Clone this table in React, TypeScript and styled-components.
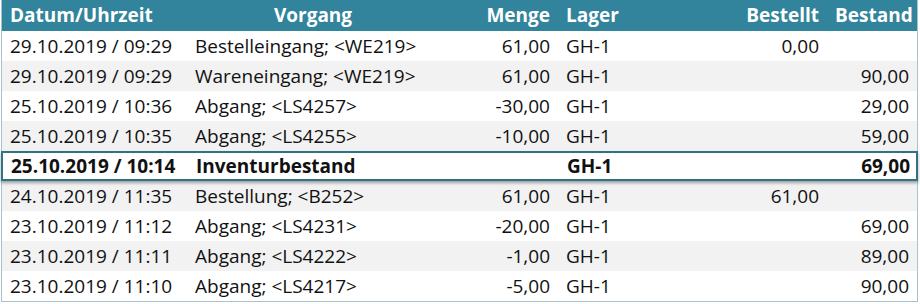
import styled, { createGlobalStyle, css } from "styled-components";

const GlobalStyle = createGlobalStyle`
  body {
    margin: 0;
    background: #ffffff;
    font-family: "Open Sans", "Liberation Sans", sans-serif;
  }
`;

type Entry = {
  date: string;
  action: string;
  qty: string;
  store: string;
  ordered: string;
  stock: string;
  inventory?: boolean;
};

const entries: Entry[] = [
  { date: "29.10.2019 / 09:29", action: "Bestelleingang; <WE219>", qty: "61,00", store: "GH-1", ordered: "0,00", stock: "" },
  { date: "29.10.2019 / 09:29", action: "Wareneingang; <WE219>", qty: "61,00", store: "GH-1", ordered: "", stock: "90,00" },
  { date: "25.10.2019 / 10:36", action: "Abgang; <LS4257>", qty: "-30,00", store: "GH-1", ordered: "", stock: "29,00" },
  { date: "25.10.2019 / 10:35", action: "Abgang; <LS4255>", qty: "-10,00", store: "GH-1", ordered: "", stock: "59,00" },
  { date: "25.10.2019 / 10:14", action: "Inventurbestand", qty: "", store: "GH-1", ordered: "", stock: "69,00", inventory: true },
  { date: "24.10.2019 / 11:35", action: "Bestellung; <B252>", qty: "61,00", store: "GH-1", ordered: "61,00", stock: "" },
  { date: "23.10.2019 / 11:12", action: "Abgang; <LS4231>", qty: "-20,00", store: "GH-1", ordered: "", stock: "69,00" },
  { date: "23.10.2019 / 11:11", action: "Abgang; <LS4222>", qty: "-1,00", store: "GH-1", ordered: "", stock: "89,00" },
  { date: "23.10.2019 / 11:10", action: "Abgang; <LS4217>", qty: "-5,00", store: "GH-1", ordered: "", stock: "90,00" },
];

const columns = "185px 252px 119px 143px 126px 90px";

const Table = styled.div`
  width: 915px;
  margin-left: 1px;
  border: 1px solid #a9c3cb;
  border-top: none;
  font-size: 19px;
  color: #111111;
`;

const HeaderRow = styled.div`
  display: grid;
  grid-template-columns: ${columns};
  height: 31px;
  align-items: center;
  background: #31849b;
  color: #ffffff;
  font-weight: 700;
`;

const Row = styled.div<{ $shade: boolean; $inventory: boolean }>`
  display: grid;
  grid-template-columns: ${columns};
  height: 30px;
  align-items: center;
  background: ${(p) => (p.$shade ? "#f2f2f2" : "#ffffff")};
  ${(p) =>
    p.$inventory &&
    css`
      position: relative;
      margin: 0 -1px;
      box-sizing: border-box;
      border: 2px solid #2f7384;
      font-weight: 700;
      box-shadow: 0 2px 3px rgba(0, 0, 0, 0.35);
      z-index: 1;
    `}
`;

const Cell = styled.div<{ $align?: "left" | "center" | "right" }>`
  text-align: ${(p) => p.$align ?? "left"};
  padding: 0 8px;
  white-space: nowrap;
  line-height: 1;
`;

export default function App() {
  return (
    <>
      <GlobalStyle />
      <Table>
        <HeaderRow>
          <Cell>Datum/Uhrzeit</Cell>
          <Cell $align="center">Vorgang</Cell>
          <Cell $align="right">Menge</Cell>
          <Cell>Lager</Cell>
          <Cell $align="right">Bestellt</Cell>
          <Cell $align="right">Bestand</Cell>
        </HeaderRow>
        {entries.map((e, i) => (
          <Row key={i} $shade={i % 2 === 1} $inventory={!!e.inventory}>
            <Cell>{e.date}</Cell>
            <Cell>{e.action}</Cell>
            <Cell $align="right">{e.qty}</Cell>
            <Cell>{e.store}</Cell>
            <Cell $align="right">{e.ordered}</Cell>
            <Cell $align="right">{e.stock}</Cell>
          </Row>
        ))}
      </Table>
    </>
  );
}
